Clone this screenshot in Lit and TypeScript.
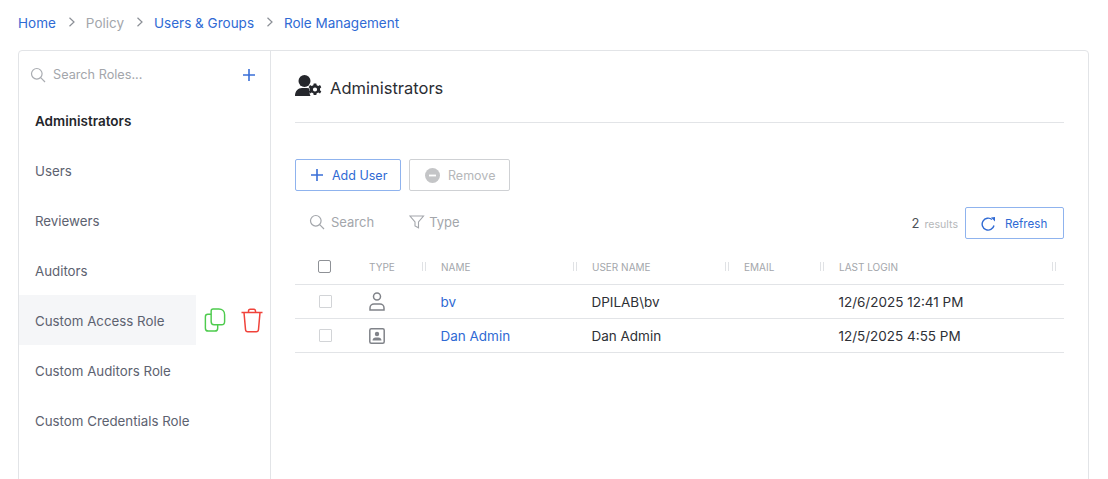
import { LitElement, html, css } from "lit";
import { customElement } from "lit/decorators.js";

const chevron = html`<svg class="chev" width="8" height="10" viewBox="0 0 8 10" fill="none" stroke="#8b8f96" stroke-width="1.2"><path d="M1.5 .8 6 5 1.5 9.2"/></svg>`;
const searchIcon = (c: string) => html`<svg width="16" height="16" viewBox="0 0 16 16" fill="none" stroke="${c}" stroke-width="1.2"><circle cx="6.8" cy="6.8" r="5.3"/><path d="M10.7 10.7 15 15"/></svg>`;
const plus = (s: number) => html`<svg width="${s}" height="${s}" viewBox="0 0 12 12" fill="none" stroke="#3a6fd8" stroke-width="1.6"><path d="M6 0v12M0 6h12"/></svg>`;
const handle = html`<svg class="handle" width="4" height="9" viewBox="0 0 4 9" stroke="#e0e2e5" stroke-width="1"><path d="M.5 0v9M3.5 0v9"/></svg>`;

@customElement("app-root")
export class AppRoot extends LitElement {
  static styles = css`
    :host { display: block; width: 1108px; height: 479px; overflow: hidden; background: #fff;
      font-family: Inter, sans-serif; font-size: 13.5px; color: #2e3036; box-sizing: border-box; padding: 0 19px 0 18px; }
    a { color: #2f6ad4; text-decoration: none; }
    .crumbs { height: 50px; padding-bottom: 4px; box-sizing: border-box; display: flex; align-items: center; }
    .crumbs .muted { color: #a3a6ab; }
    .chev { margin: 0 10px 0 12px; position: relative; top: -1px; }
    .card { display: flex; height: 440px; border: 1px solid #e2e4e7; border-radius: 4px; box-sizing: border-box; }
    .side { width: 252px; flex: none; border-right: 1px solid #e2e4e7; box-sizing: border-box; }
    .side-search { height: 44px; padding: 3px 15px 0 11px; box-sizing: border-box; display: flex; align-items: center; color: #a3a6ab; font-size: 12.7px; }
    .side-search span { margin-left: 7px; flex: 1; }
    .role { height: 50px; display: flex; align-items: center; }
    .role-name { height: 50px; width: 177px; display: flex; align-items: center; padding: 2px 0 0 16px; box-sizing: border-box; color: #5d6270; font-size: 13.3px; white-space: nowrap; }
    .role.active .role-name { font-size: 13.5px; font-weight: 600; color: #24262b; }
    .role.hover .role-name { background: #f5f6f8; }
    .acts { display: flex; align-items: center; gap: 15px; margin-left: 8px; }
    .main { flex: 1; padding: 0 24px; min-width: 0; }
    .head { height: 71px; display: flex; align-items: center; gap: 8px; border-bottom: 1px solid #e2e4e7; font-size: 16.5px; color: #2b2d33; }
    .head span { padding-top: 2px; }
    .head svg { margin-bottom: 2px; }
    .btns { display: flex; gap: 8px; margin-top: 36px; }
    .btn { height: 32px; box-sizing: border-box; display: flex; align-items: center; border: 1px solid #8fb3ee; border-radius: 2px; font-size: 12.5px; color: #2f6ad4; }
    .btn.add { width: 106px; padding-left: 15px; gap: 9px; }
    .btn.rem { width: 101px; padding-left: 15px; gap: 8px; border-color: #cfd1d4; color: #b5b7ba; }
    .btn.ref { width: 99px; padding-left: 15px; gap: 9px; font-size: 11.6px; }
    .btn.ref span { padding-top: 2px; }
    .tools { display: flex; align-items: center; height: 32px; margin-top: 16px; padding-left: 14px; color: #a3a6ab; font-size: 13px; }
    .tools .f { display: flex; align-items: center; gap: 6px; padding-bottom: 3px; }
    .tools .f + .f { margin-left: 35px; gap: 4px; }
    .count { margin-left: auto; display: flex; align-items: baseline; margin-right: 7px; color: #4d5057; }
    .count small { font-size: 10.6px; color: #b5b7ba; margin-left: 5px; }
    .table { margin-top: 10px; }
    .tr { display: grid; grid-template-columns: 74px 72px 151px 152px 95px 1fr; height: 34px; align-items: center; border-bottom: 1px solid #e2e4e7; box-sizing: border-box; }
    .tr.th { height: 36px; font-size: 10px; color: #a3a6ab; }
    .th .c { display: flex; align-items: center; justify-content: space-between; padding: 1px 15px 0 0; }
    .th .c.last { padding-right: 8px; }
    .th .handle { position: relative; top: -1px; }
    .cb { width: 11px; height: 11px; border: 1px solid #d2d4d7; border-radius: 1px; margin-left: 24px; }
    .th .cb { border: 1.5px solid #8e9196; border-radius: 2px; margin-left: 23px; }
    .tr .td { white-space: nowrap; margin-left: -0.6px; }
    .ico { display: block; }
  `;

  private role(name: string, cls = "", extra: unknown = null) {
    return html`<div class="role ${cls}"><div class="role-name">${name}</div>${extra}</div>`;
  }

  render() {
    const acts = html`<div class="acts">
      <svg width="22" height="25" viewBox="0 0 22 26" fill="none" stroke="#4ecb4e" stroke-width="1.5"><path d="M9 1h6c3.500 0 6 2.500 6 6v7c0 2-1.200 3.500-3.200 3.500H10C8 17.500 7 16 7 14V3c0-1 1-2 2-2Z"/><path d="M7 6.500H3.500C2 6.500 1 7.500 1 9v12c0 1.500 1 3 3 3h7c2 0 2.800-1.500 2.800-3v-3.500"/></svg>
      <svg width="22" height="25" viewBox="0 0 22 25" fill="none" stroke="#f0423a" stroke-width="1.5"><path d="M.5 4.500h21M7.500 4.500V3c0-1 .8-1.800 1.800-1.800h3.400c1 0 1.800.8 1.800 1.800v1.500M3 4.500l1.500 17c.1 1.300 1 2.300 2.300 2.300h8.400c1.300 0 2.200-1 2.300-2.300l1.500-17"/></svg>
    </div>`;
    return html`
      <nav class="crumbs">
        <a href="#">Home</a>${chevron}<span class="muted">Policy</span>${chevron}<a href="#">Users &amp; Groups</a>${chevron}<a href="#">Role Management</a>
      </nav>
      <section class="card">
        <aside class="side">
          <div class="side-search">${searchIcon("#a9acb1")}<span>Search Roles...</span>${plus(12)}</div>
          <div class="roles">
            ${this.role("Administrators", "active")}
            ${this.role("Users")}
            ${this.role("Reviewers")}
            ${this.role("Auditors")}
            ${this.role("Custom Access Role", "hover", acts)}
            ${this.role("Custom Auditors Role")}
            ${this.role("Custom Credentials Role")}
          </div>
        </aside>
        <main class="main">
          <div class="head">
            <svg width="27" height="22" viewBox="0 0 27 22" fill="#25272c"><circle cx="9.500" cy="6" r="6"/><path d="M0 21c0-5 3-8 7-8h5c1 0 2 .2 2.700.5-.6 2.200-.3 5.500.8 7.500H0Z"/><path transform="translate(-1 -2)" fill-rule="evenodd" d="M19.700 10.500h2.600l.4 1.800 1.600.7 1.700-1 1.300 2.200-1.300 1.200v1.800l1.300 1.200-1.300 2.200-1.700-1-1.600.7-.4 1.800h-2.600l-.4-1.800-1.600-.7-1.700 1-1.300-2.200 1.300-1.200v-1.800l-1.300-1.200 1.300-2.200 1.700 1 1.600-.7ZM21 14.400a2.100 2.100 0 1 0 0 4.200 2.100 2.100 0 0 0 0-4.200Z"/></svg>
            <span>Administrators</span>
          </div>
          <div class="btns">
            <div class="btn add">${plus(12)}<span>Add User</span></div>
            <div class="btn rem"><svg width="15" height="15" viewBox="0 0 15 15"><circle cx="7.500" cy="7.500" r="7.500" fill="#c4c5c7"/><rect x="4" y="6.600" width="7" height="1.800" fill="#fff"/></svg><span>Remove</span></div>
          </div>
          <div class="tools">
            <div class="f">${searchIcon("#a3a6ab")}<span>Search</span></div>
            <div class="f"><svg width="16" height="14" viewBox="0 0 16 14" fill="none" stroke="#a3a6ab" stroke-width="1.1"><path d="M1 1h13.500L9.500 7v5.800L6 11V7Z"/></svg><span>Type</span></div>
            <div class="count">2<small>results</small></div>
            <div class="btn ref"><svg width="15" height="15" viewBox="0 0 15 15" fill="none" stroke="#2f6ad4" stroke-width="1.4"><path d="M13 9.500a6 6 0 1 1-2-6"/><path d="M10 1.500 14 1v4.500Z" fill="#2f6ad4" stroke="none"/></svg><span>Refresh</span></div>
          </div>
          <div class="table">
            <div class="tr th">
              <div><div class="cb"></div></div>
              <div class="c">TYPE${handle}</div>
              <div class="c">NAME${handle}</div>
              <div class="c">USER NAME${handle}</div>
              <div class="c">EMAIL${handle}</div>
              <div class="c last">LAST LOGIN${handle}</div>
            </div>
            <div class="tr">
              <div><div class="cb"></div></div>
              <div><svg class="ico" width="16" height="19" viewBox="0 0 16 19" fill="none" stroke="#808389" stroke-width="1.500"><circle cx="8" cy="4.500" r="3.500"/><path d="M1 18v-2c0-2.500 2-4 4-4h6c2 0 4 1.500 4 4v2Z"/></svg></div>
              <div class="td"><a href="#">bv</a></div>
              <div class="td">DPILAB\\bv</div>
              <div class="td"></div>
              <div class="td">12/6/2025 12:41 PM</div>
            </div>
            <div class="tr">
              <div><div class="cb"></div></div>
              <div><svg class="ico" width="16" height="16" viewBox="0 0 16 16" fill="none" stroke="#808389" stroke-width="1.500"><rect x=".8" y=".8" width="14.400" height="14.400" rx="1.500"/><circle cx="8" cy="6" r="2.200" fill="#808389" stroke="none"/><path d="M3.500 12.500c0-2 1.500-3 3-3h3c1.500 0 3 1 3 3Z" fill="#808389" stroke="none"/></svg></div>
              <div class="td"><a href="#">Dan Admin</a></div>
              <div class="td">Dan Admin</div>
              <div class="td"></div>
              <div class="td">12/5/2025 4:55 PM</div>
            </div>
          </div>
        </main>
      </section>
    `;
  }
}
